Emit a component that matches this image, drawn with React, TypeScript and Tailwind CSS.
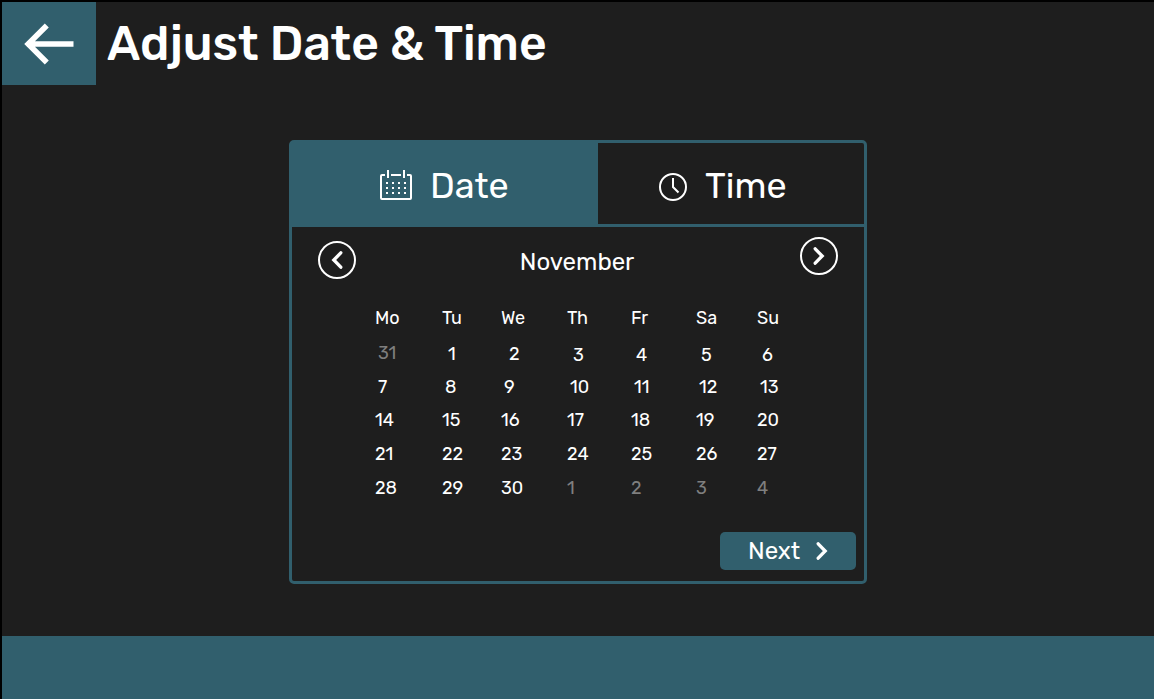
import React from "react";

type Day = { label: string; cell?: string; muted?: boolean };

const weekdays = ["Mo", "Tu", "We", "Th", "Fr", "Sa", "Su"];

const days: Day[] = [
  { label: "31", cell: "pl-[3px] -mt-px", muted: true },
  { label: "1", cell: "pl-[6px]" },
  { label: "2", cell: "pl-[8px]" },
  { label: "3", cell: "pl-[6px] pt-px" },
  { label: "4", cell: "pl-[5px] pt-px" },
  { label: "5", cell: "pl-[5px] pt-px" },
  { label: "6", cell: "pl-[5px] pt-px" },
  { label: "7", cell: "pl-[3px]" },
  { label: "8", cell: "pl-[3px]" },
  { label: "9", cell: "pl-[3px]" },
  { label: "10", cell: "pl-[3px]" },
  { label: "11", cell: "pl-[3px]" },
  { label: "12", cell: "pl-[3px]" },
  { label: "13", cell: "pl-[3px]" },
  { label: "14" },
  { label: "15" },
  { label: "16" },
  { label: "17" },
  { label: "18" },
  { label: "19" },
  { label: "20" },
  { label: "21" },
  { label: "22" },
  { label: "23" },
  { label: "24" },
  { label: "25" },
  { label: "26" },
  { label: "27" },
  { label: "28" },
  { label: "29" },
  { label: "30" },
  { label: "1", muted: true },
  { label: "2", muted: true },
  { label: "3", muted: true },
  { label: "4", muted: true },
];

function ArrowLeft() {
  return (
    <svg width="50" height="42" viewBox="0 0 50 42" fill="none" stroke="white" strokeWidth="5.6">
      <path d="M49.5 21H4M22.8 2.4 4.2 21l18.6 18.6" />
    </svg>
  );
}

function CalendarIcon() {
  return (
    <svg width="32" height="30" viewBox="0 0 32 30" fill="none" stroke="white" strokeWidth="2">
      <path d="M5 5H2Q1 5 1 6V28Q1 29 2 29H30Q31 29 31 28V6Q31 5 30 5H27M11 5H21M8 0V8M24 0V8" />
      {[13, 18, 23].map((y) => (
        <path key={y} d={`M6 ${y}h2M12 ${y}h2M18 ${y}h2M24 ${y}h2`} />
      ))}
    </svg>
  );
}

function ClockIcon() {
  return (
    <svg width="28" height="28" viewBox="0 0 28 28" fill="none" stroke="white" strokeWidth="2">
      <circle cx="14" cy="14" r="13" />
      <path d="M14 5V14L19.5 19.5" />
    </svg>
  );
}

function Chevron({ left = false }: { left?: boolean }) {
  return (
    <svg width="12" height="20" viewBox="0 0 12 20" fill="none" stroke="white" strokeWidth="3.3" strokeLinecap="round">
      <path d={left ? "M9.8 2.8 2.8 10l7 7.2" : "M2.2 2.8 9.2 10l-7 7.2"} />
    </svg>
  );
}

export default function App() {
  return (
    <div className="flex h-[699px] w-[1154px] flex-col overflow-hidden border-l-2 border-t-2 border-black bg-[#1e1e1e] font-['Rubik',Roboto,sans-serif] text-white">
      <header className="flex h-[83px] shrink-0">
        <button aria-label="Back" className="flex w-[94px] items-center justify-center bg-[#315f6d] pr-px">
          <ArrowLeft />
        </button>
        <h1 className="ml-[11px] mt-[10px] whitespace-nowrap text-[48px] font-medium leading-[64px]">
          Adjust Date &amp; Time
        </h1>
      </header>

      <main className="flex grow justify-center pt-[55px]">
        <section className="flex h-[444px] w-[578px] flex-col rounded-[5px] border-[3px] border-[#315f6d]">
          <div className="flex h-[84px] shrink-0 border-b-[3px] border-[#315f6d]">
            <button className="flex w-[306px] bg-[#315f6d] pl-[88px] pt-[27px]">
              <CalendarIcon />
              <span className="-mt-[6px] ml-[18px] text-[36px] leading-[44px]">Date</span>
            </button>
            <button className="flex pl-[61px] pt-[30px]">
              <ClockIcon />
              <span className="-mt-[9px] ml-[18px] text-[36px] leading-[44px]">Time</span>
            </button>
          </div>

          <div className="flex h-[81px] shrink-0 items-start justify-between px-[26px]">
            <button aria-label="Previous month" className="mt-[14px] flex size-[38px] items-center justify-center rounded-full border-2 border-white pr-px">
              <Chevron left />
            </button>
            <h2 className="mt-[20px] pr-[2px] text-[24px] leading-[30px]">November</h2>
            <button aria-label="Next month" className="mt-[10px] flex size-[38px] items-center justify-center rounded-full border-2 border-white pl-px">
              <Chevron />
            </button>
          </div>

          <div className="ml-[83px] grid grid-cols-[67px_59px_66px_64px_65px_61px_30px] grid-rows-[36px_33px_33px_34px_34px_24px] whitespace-nowrap text-[18px] leading-[20px]">
            {weekdays.map((day) => (
              <span key={day}>{day}</span>
            ))}
            {days.map((day, index) => (
              <span key={index} className={`${day.cell ?? ""} ${day.muted ? "text-[#7f7f7f]" : ""}`}>
                {day.label}
              </span>
            ))}
          </div>

          <button className="mr-[8px] mt-[30px] flex h-[38px] w-[136px] shrink-0 items-center self-end rounded-[5px] bg-[#315f6d] pl-[28px]">
            <span className="text-[24px] leading-[30px]">Next</span>
            <span className="ml-[16px]"><Chevron /></span>
          </button>
        </section>
      </main>

      <footer className="h-[63px] shrink-0 bg-[#315f6d]" />
    </div>
  );
}
